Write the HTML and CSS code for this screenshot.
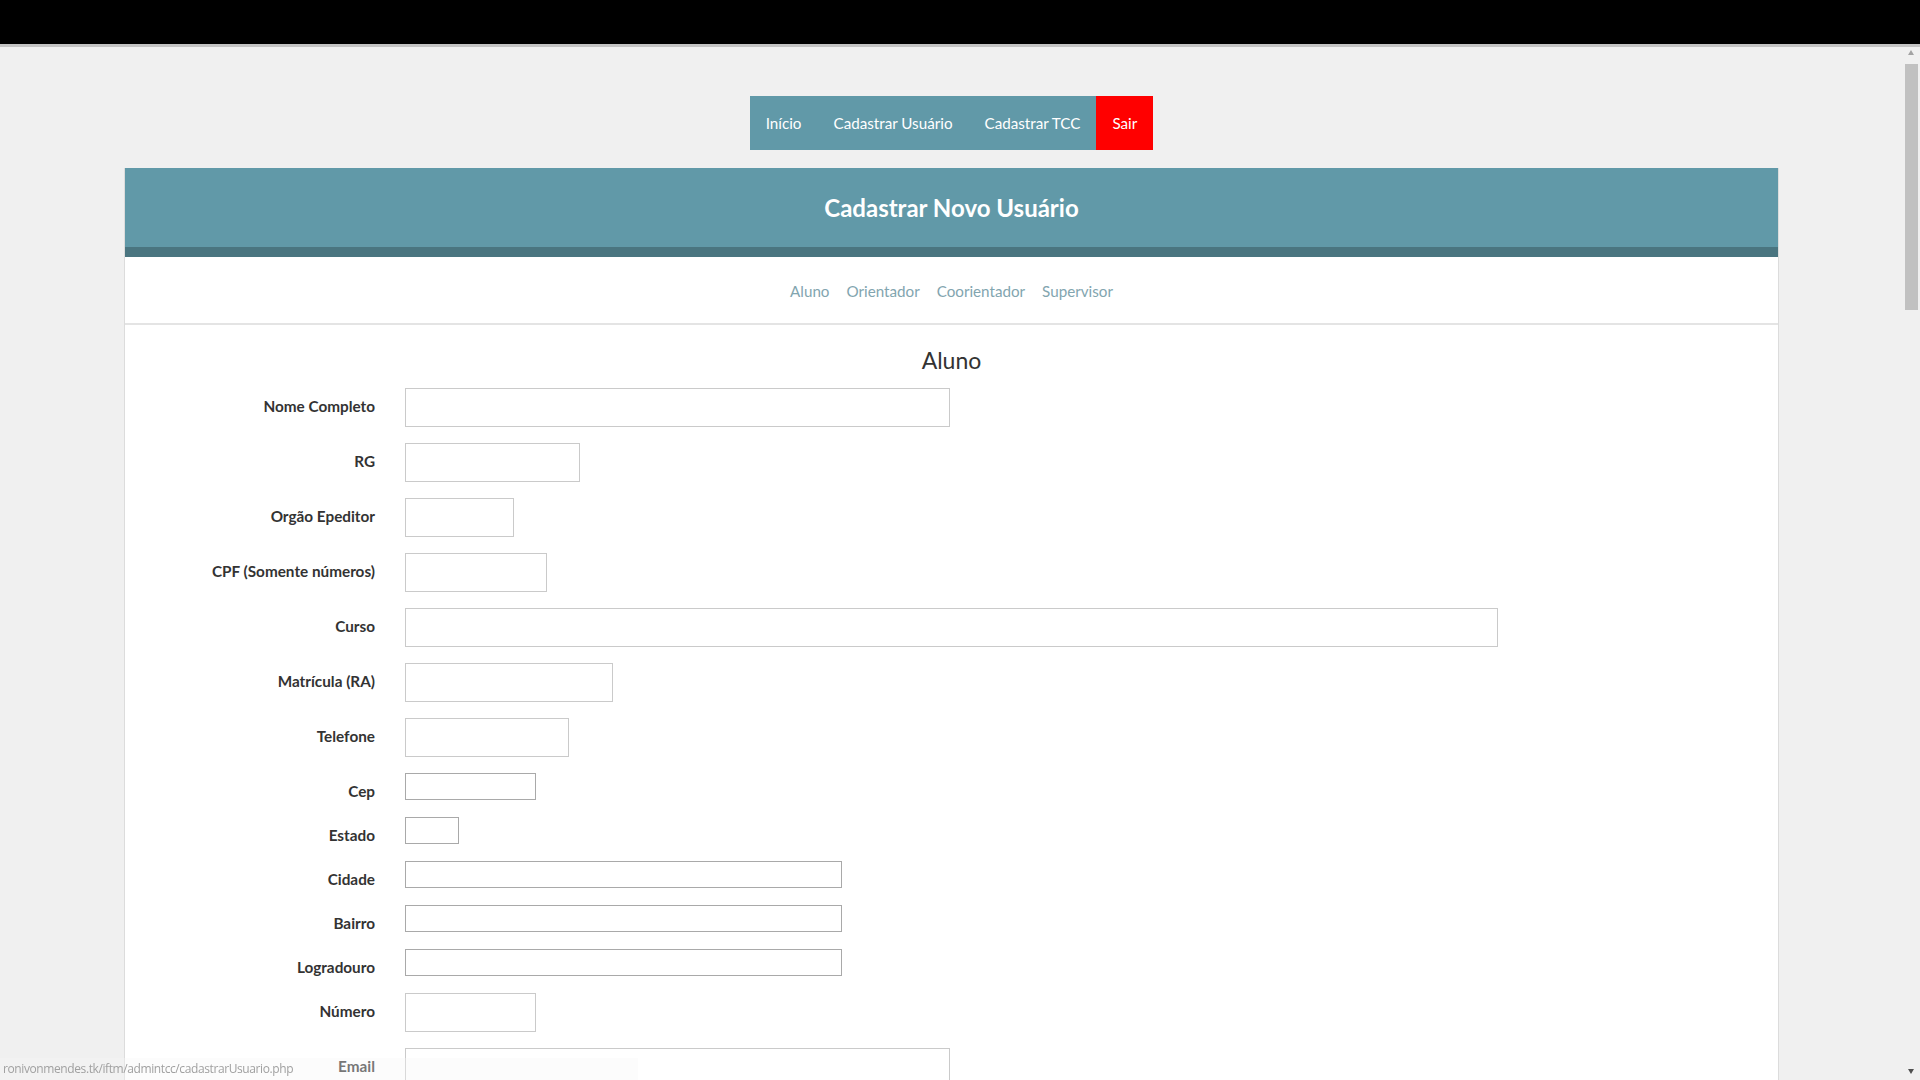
FILE: index.html
```html
<!DOCTYPE html>
<html lang="pt-br">
<head>
<meta charset="utf-8">
<title>Cadastrar Usuário</title>
<link rel="stylesheet" href="styles.css">
</head>
<body>
<div class="topbar"></div>
<div class="viewport">
  <div class="page">
    <nav class="menu">
      <a class="menu-item" href="#">Início</a>
      <a class="menu-item" href="#">Cadastrar Usuário</a>
      <a class="menu-item" href="#">Cadastrar TCC</a>
      <a class="menu-item menu-exit" href="#">Sair</a>
    </nav>
    <section class="panel">
      <header class="panel-head">
        <h1 class="panel-title">Cadastrar Novo Usuário</h1>
      </header>
      <div class="tabs">
        <a href="#" class="tab">Aluno</a>
        <a href="#" class="tab">Orientador</a>
        <a href="#" class="tab">Coorientador</a>
        <a href="#" class="tab">Supervisor</a>
      </div>
      <form class="form">
        <h2 class="form-title">Aluno</h2>
        <div class="row"><label class="lbl">Nome Completo</label><input class="field w-545" type="text"></div>
        <div class="row"><label class="lbl">RG</label><input class="field w-175" type="text"></div>
        <div class="row"><label class="lbl">Orgão Epeditor</label><input class="field w-109" type="text"></div>
        <div class="row"><label class="lbl">CPF (Somente números)</label><input class="field w-142" type="text"></div>
        <div class="row"><label class="lbl">Curso</label><input class="field w-1093" type="text"></div>
        <div class="row"><label class="lbl">Matrícula (RA)</label><input class="field w-208" type="text"></div>
        <div class="row"><label class="lbl">Telefone</label><input class="field w-164" type="text"></div>
        <div class="row row-sm"><label class="lbl">Cep</label><input class="field-sm w-131" type="text"></div>
        <div class="row row-sm"><label class="lbl">Estado</label><input class="field-sm w-54" type="text"></div>
        <div class="row row-sm"><label class="lbl">Cidade</label><input class="field-sm w-437" type="text"></div>
        <div class="row row-sm"><label class="lbl">Bairro</label><input class="field-sm w-437" type="text"></div>
        <div class="row row-sm"><label class="lbl">Logradouro</label><input class="field-sm w-437" type="text"></div>
        <div class="row"><label class="lbl">Número</label><input class="field w-131" type="text"></div>
        <div class="row"><label class="lbl">Email</label><input class="field w-545" type="text"></div>
      </form>
    </section>
  </div>
  <div class="scrollbar">
    <div class="sb-arrow sb-up"></div>
    <div class="sb-track"><div class="sb-thumb"></div></div>
    <div class="sb-arrow sb-down"></div>
  </div>
</div>
<div class="statusbar">ronivonmendes.tk/iftm/admintcc/cadastrarUsuario.php</div>
</body>
</html>
```
FILE: styles.css
```css
* { box-sizing: border-box; }
html, body { margin: 0; padding: 0; }
body {
  width: 1920px;
  height: 1080px;
  overflow: hidden;
  background: #f0f0f0;
  font-family: Lato, "Open Sans", sans-serif;
  color: #333;
}
.topbar {
  height: 47px;
  background: #000;
  border-bottom: 3px solid #c4c4c4;
  box-shadow: 0 1px 2px rgba(0,0,0,0.15);
}
.viewport {
  display: flex;
  height: 1033px;
}
.page {
  flex: 1;
  background: #f0f0f0;
  overflow: hidden;
  padding-top: 49px;
}
.menu {
  display: flex;
  width: max-content;
  margin: 0 auto;
  background: #6199a8;
}
.menu-item {
  display: block;
  padding: 0 16px;
  line-height: 54px;
  height: 54px;
  color: #fff;
  text-decoration: none;
  font-size: 15.2px;
}
.menu-exit { background: #ff0000; }
.panel {
  width: 1655px;
  margin: 18px auto 0;
  background: #fff;
  border-left: 1px solid #dcdcdc;
  border-right: 1px solid #dcdcdc;
  min-height: 1000px;
}
.panel-head {
  background: #6199a8;
  border-bottom: 10px solid #4a7580;
  height: 89px;
  display: flex;
  align-items: center;
  justify-content: center;
}
.panel-title {
  margin: 0;
  color: #fff;
  font-size: 24px;
  font-weight: 700;
}
.tabs {
  height: 68px;
  border-bottom: 2px solid #e4e4e4;
  display: flex;
  justify-content: center;
  align-items: center;
  gap: 17px;
  padding-top: 2px;
}
.tab {
  color: #82a5af;
  text-decoration: none;
  font-size: 15.2px;
}
.form {
  padding-top: 19px;
}
.form-title {
  margin: 0 0 12px;
  text-align: center;
  font-weight: 400;
  font-size: 23px;
  line-height: 32px;
  color: #333;
}
.row {
  display: flex;
  align-items: flex-start;
  margin-bottom: 16px;
}
.row-sm { margin-bottom: 17px; }
.lbl {
  width: 250px;
  height: 27px;
  margin-right: 30px;
  text-align: right;
  font-weight: 700;
  font-size: 15.3px;
  line-height: 20px;
  padding-top: 8px;
  color: #333;
  white-space: nowrap;
}
.field {
  height: 39px;
  border: 1px solid #cacaca;
  background: #fff;
  margin: 0;
  padding: 6px 10px;
  font: inherit;
}
.field-sm {
  height: 27px;
  border: 1px solid #a9a9a9;
  background: #fff;
  margin: 0;
  padding: 2px 4px;
  font: inherit;
}
.w-545 { width: 545px; }
.w-175 { width: 175px; }
.w-109 { width: 109px; }
.w-142 { width: 142px; }
.w-1093 { width: 1093px; }
.w-208 { width: 208px; }
.w-164 { width: 164px; }
.w-131 { width: 131px; }
.w-54 { width: 54px; }
.w-437 { width: 437px; }
.scrollbar {
  width: 17px;
  background: #f0f0f0;
  display: flex;
  flex-direction: column;
  align-items: center;
}
.sb-arrow {
  width: 17px;
  height: 17px;
  position: relative;
}
.sb-up::after, .sb-down::after {
  content: "";
  position: absolute;
  left: 5px;
  border-left: 3.5px solid transparent;
  border-right: 3.5px solid transparent;
}
.sb-up::after { top: 3px; border-bottom: 5px solid #a3a3a3; }
.sb-down::after { bottom: 6px; border-top: 5px solid #505050; }
.sb-track {
  flex: 1;
  width: 17px;
  padding: 0 2px;
}
.sb-thumb {
  height: 246px;
  background: #c1c1c1;
}
.statusbar {
  position: fixed;
  left: 0;
  bottom: 0;
  width: 638px;
  height: 22px;
  background: rgba(247, 247, 247, 0.35);
  color: #a0a0a0;
  font-family: "Open Sans", sans-serif;
  font-size: 12px;
  line-height: 22px;
  padding-left: 3px;
  letter-spacing: -0.4px;
  z-index: 5;
}
```
